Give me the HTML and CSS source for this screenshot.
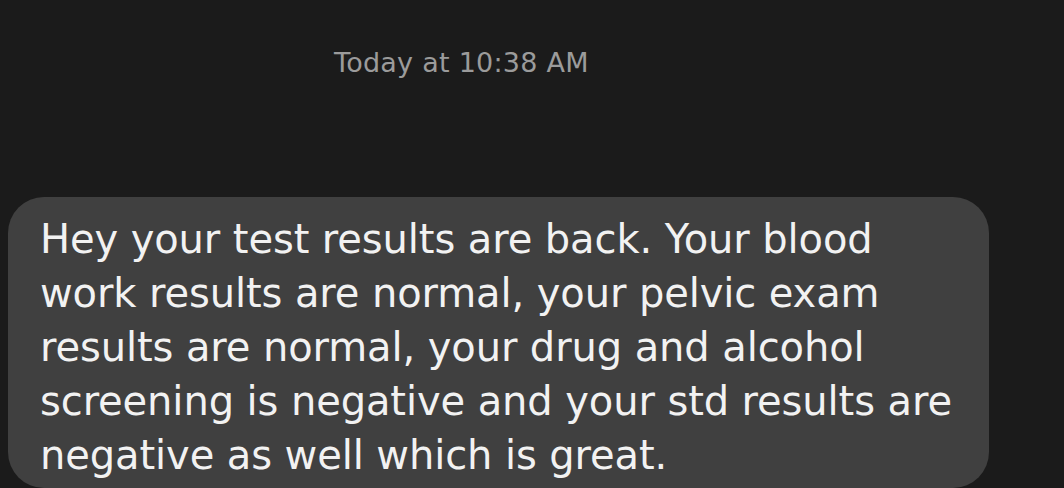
FILE: index.html
```html
<!DOCTYPE html>
<html>
<head>
<meta charset="utf-8">
<link rel="stylesheet" href="styles.css">
</head>
<body>
<div class="screen">
  <div class="timestamp">Today at 10:38 AM</div>
  <div class="bubble">
    <p class="msg">Hey your test results are back. Your blood<br>work results are normal, your pelvic exam<br>results are normal, your drug and alcohol<br>screening is negative and your std results are<br>negative as well which is great.</p>
  </div>
</div>
</body>
</html>
```
FILE: styles.css
```css
html, body {
  margin: 0;
  padding: 0;
  background: #1b1b1b;
  overflow: hidden;
}
.screen {
  width: 1064px;
  height: 488px;
  display: flex;
  flex-direction: column;
  font-family: "DejaVu Sans", sans-serif;
}
.timestamp {
  margin-top: 46px;
  padding-left: 334px;
  font-size: 27px;
  line-height: 34px;
  letter-spacing: 0.25px;
  color: #9b9b9b;
}
.bubble {
  margin-top: 117px;
  margin-left: 8px;
  width: 981px;
  height: 296px;
  box-sizing: border-box;
  background: #404040;
  border-radius: 36px;
  padding: 15px 0 0 32px;
}
.msg {
  margin: 0;
  font-size: 40px;
  line-height: 54px;
  letter-spacing: -0.1px;
  color: #f2f2f2;
  white-space: nowrap;
}
```
